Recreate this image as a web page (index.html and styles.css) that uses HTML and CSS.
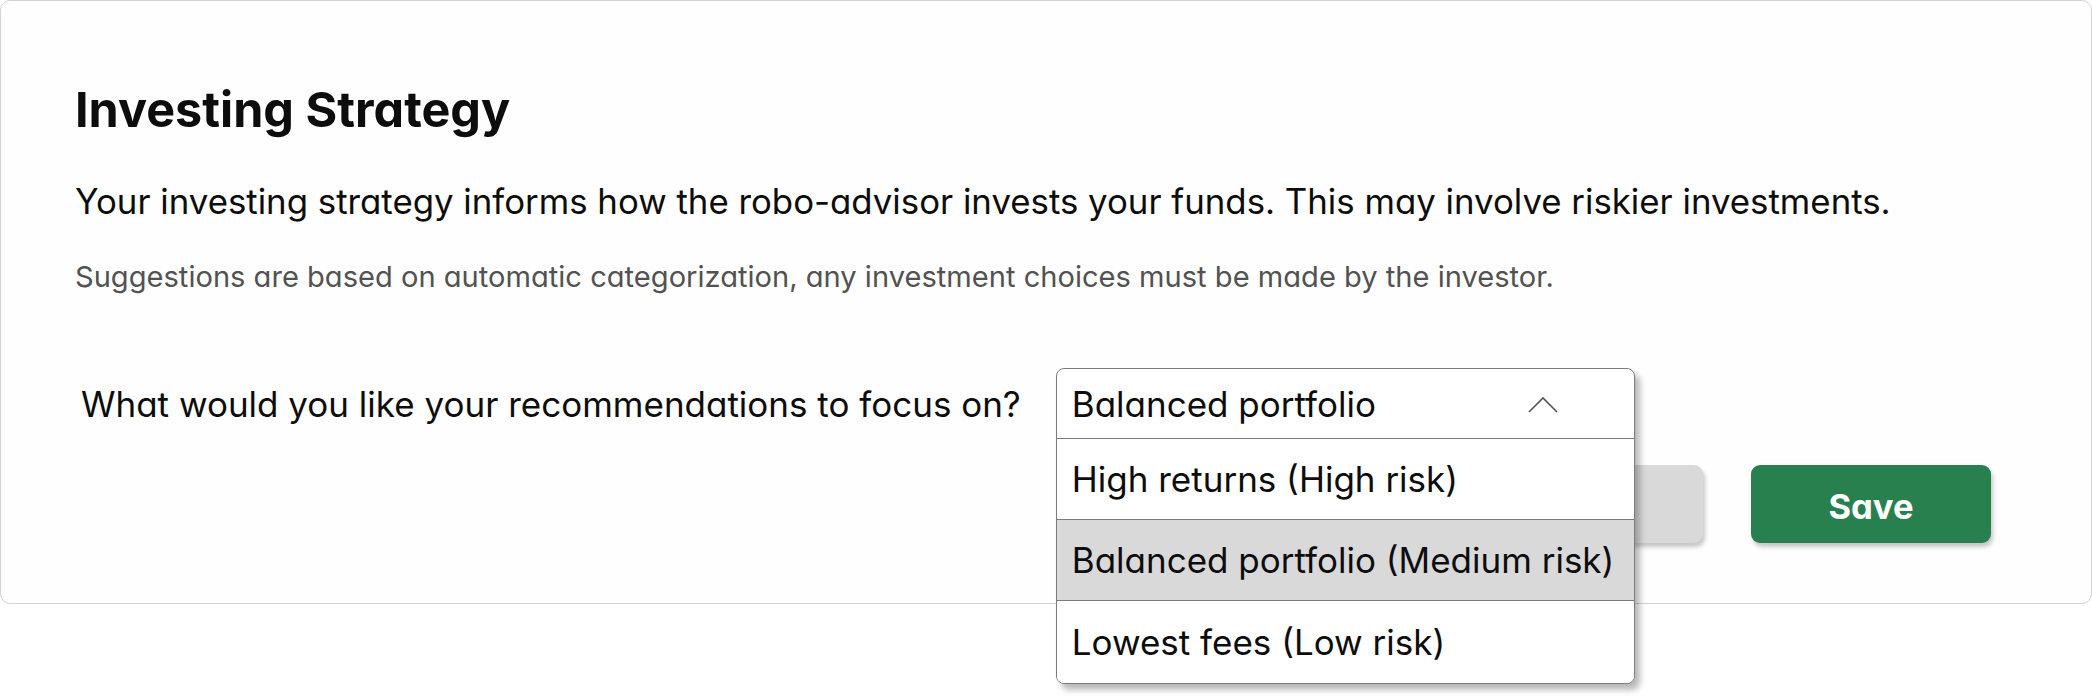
FILE: index.html
```html
<!DOCTYPE html>
<html lang="en">
<head>
<meta charset="utf-8">
<title>Investing Strategy</title>
<link rel="stylesheet" href="styles.css">
</head>
<body>
<main class="page">
<section class="card">
  <h1 class="title">Investing Strategy</h1>
  <p class="lead">Your investing strategy informs how the robo-advisor invests your funds. This may involve riskier investments.</p>
  <p class="note">Suggestions are based on automatic categorization, any investment choices must be made by the investor.</p>
  <div class="question-row">
    <label class="question">What would you like your recommendations to focus on?</label>
    <div class="select">
      <div class="panel">
        <div class="select-head">
          <span>Balanced portfolio</span>
          <svg class="chevron" width="30" height="17" viewBox="0 0 30 17" aria-hidden="true"><polyline points="1,16 15,2 29,16" fill="none" stroke="#555" stroke-width="1.6"/></svg>
        </div>
        <div class="option">High returns (High risk)</div>
        <div class="option option-active">Balanced portfolio (Medium risk)</div>
        <div class="option option-last">Lowest fees (Low risk)</div>
      </div>
    </div>
  </div>
  <div class="actions">
    <button class="btn btn-cancel" aria-label="Cancel"></button>
    <button class="btn btn-save">Save</button>
  </div>
</section>
</main>
</body>
</html>
```
FILE: styles.css
```css
html, body {
  margin: 0;
  padding: 0;
  background: #ffffff;
}
body {
  font-family: Inter, "Noto Sans", sans-serif;
  font-feature-settings: "cv11" 1;
  color: #0d0d0d;
}
.page {
  display: block;
  min-height: 699px;
}
.card {
  position: relative;
  box-sizing: border-box;
  width: 2092px;
  height: 604px;
  border: 1px solid #d3d3d3;
  border-radius: 10px;
  background: #fefefe;
  padding: 80px 100px 0 74px;
}
.title {
  margin: 0;
  font-size: 48.5px;
  line-height: 58px;
  font-weight: 700;
  letter-spacing: 0;
}
.lead {
  margin: 41px 0 0;
  font-size: 34.8px;
  line-height: 42px;
  font-weight: 400;
}
.note {
  margin: 37px 0 0;
  font-size: 29.1px;
  line-height: 35px;
  color: #525252;
}
.question-row {
  display: flex;
  align-items: center;
  margin-top: 74px;
  padding-left: 6px;
}
.question {
  font-size: 35px;
  line-height: 42px;
}
.select {
  position: relative;
  width: 579px;
  height: 71px;
  margin-left: 35px;
  flex: none;
  z-index: 5;
}
.panel {
  position: absolute;
  top: 0;
  left: 0;
  right: 0;
  z-index: 5;
  box-sizing: border-box;
  border: 1px solid #7c7c7c;
  border-radius: 8px;
  background: #fff;
  overflow: hidden;
  box-shadow: 5px 6px 6px rgba(0, 0, 0, 0.28);
  font-size: 35px;
  line-height: 42px;
}
.select-head {
  display: flex;
  align-items: center;
  justify-content: space-between;
  height: 69px;
  padding: 0 76px 0 15px;
  border-bottom: 1px solid #7c7c7c;
}
.chevron {
  display: block;
  margin-top: 1px;
}
.option {
  display: flex;
  align-items: center;
  height: 80px;
  padding-left: 15px;
  border-bottom: 1px solid #7c7c7c;
  background: #fff;
}
.option-active {
  background: #d9d9d9;
}
.option-last {
  height: 82px;
  border-bottom: none;
}
.actions {
  display: flex;
  justify-content: flex-end;
  gap: 48px;
  margin-top: 26px;
}
.btn {
  width: 240px;
  height: 78px;
  border: none;
  border-radius: 9px;
  font-family: Inter, "Noto Sans", sans-serif;
  font-feature-settings: "cv11" 1;
  font-size: 34.6px;
  font-weight: 700;
  padding: 4px 0 0;
  box-shadow: 2px 4px 4px rgba(0, 0, 0, 0.22);
}
.btn-cancel {
  background: #d9d9d9;
  color: #333;
}
.btn-save {
  background: #28804f;
  color: #ffffff;
}
```
